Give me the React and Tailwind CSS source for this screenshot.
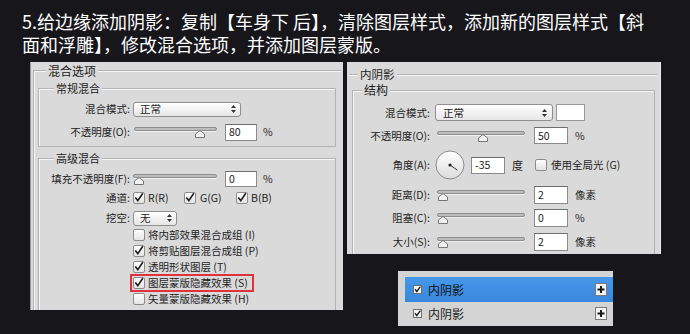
import React from 'react';

function Check({ on = true }) {
  return (
    <svg width="12" height="12" viewBox="0 0 12 12" className="block shrink-0">
      <defs>
        <linearGradient id="cbg" x1="0" y1="0" x2="0" y2="1">
          <stop offset="0" stopColor="#ffffff" />
          <stop offset="1" stopColor="#e2e2e2" />
        </linearGradient>
      </defs>
      <rect x="0.5" y="0.5" width="11" height="11" rx="1.5" fill="url(#cbg)" stroke="#8c8c8c" />
      {on && <path d="M2.3 5.6 L4.8 8.6 L9.8 1.2" fill="none" stroke="#1e1e1e" strokeWidth="1.6" />}
    </svg>
  );
}

function Arrows() {
  return (
    <svg width="5" height="8" viewBox="0 0 5 8" className="block shrink-0">
      <path d="M0 3 L2.5 0 L5 3 Z M0 5 L2.5 8 L5 5 Z" fill="#333" />
    </svg>
  );
}

function Slider({ w, pos }) {
  return (
    <svg width={w} height="14" className="block shrink-0">
      <rect x="0.5" y="2.5" width={w - 1} height="3" rx="1.5" fill="#bdbdbd" stroke="#8d8d8d" />
      <line x1="1" y1="6.5" x2={w - 1} y2="6.5" stroke="#f2f2f2" />
      <path
        d={`M${pos - 4.5} 12.5 L${pos - 4.5} 9 L${pos} 5.5 L${pos + 4.5} 9 L${pos + 4.5} 12.5 Z`}
        fill="#f3f3f3"
        stroke="#777"
      />
    </svg>
  );
}

function Dial() {
  return (
    <svg width="30" height="30" viewBox="0 0 30 30" className="block shrink-0">
      <defs>
        <linearGradient id="dial" x1="0" y1="0" x2="0" y2="1">
          <stop offset="0" stopColor="#ffffff" />
          <stop offset="1" stopColor="#dcdcdc" />
        </linearGradient>
      </defs>
      <circle cx="15" cy="15" r="14" fill="url(#dial)" stroke="#8a8a8a" />
      <line x1="15" y1="15" x2="22.4" y2="20.2" stroke="#333" strokeWidth="1" />
      <circle cx="15" cy="15" r="1.6" fill="#222" />
    </svg>
  );
}

function Plus() {
  return (
    <svg width="12" height="13" viewBox="0 0 12 13" className="block shrink-0">
      <rect x="0.5" y="0.5" width="11" height="12" fill="#f4f4f4" stroke="#7a7a7a" />
      <path d="M6 3 V10 M2.5 6.5 H9.5" stroke="#1a1a1a" strokeWidth="2" />
    </svg>
  );
}

function SmallCheck() {
  return (
    <svg width="9" height="9" viewBox="0 0 9 9" className="block shrink-0">
      <rect x="0.5" y="0.5" width="8" height="8" fill="#f6f6f6" stroke="#6f6f6f" />
      <path d="M2 4.3 L3.8 6.5 L7.4 1.6" fill="none" stroke="#222" strokeWidth="1.4" />
    </svg>
  );
}

const boxCls = 'bg-white border border-[#8a8a8a] border-t-[#6e6e6e] flex items-center pl-[3px]';

export default function App() {
  return (
    <div className="w-[690px] h-[334px] overflow-hidden bg-[#17161b] font-['Noto_Sans_CJK_SC','Noto_Sans',sans-serif] text-[#1d1d1d]">
      {/* Title */}
      <div className="pl-[22px] pt-[10px] text-[18px] leading-[23px] text-white whitespace-nowrap">
        <div>5.给边缘添加阴影：复制【车身下 后】，清除图层样式，添加新的图层样式【斜</div>
        <div>面和浮雕】，修改混合选项，并添加图层蒙版。</div>
      </div>

      <div className="flex mt-[6px]">
        {/* Left panel: 混合选项 */}
        <div className="ml-[30px] w-[313px] h-[248px] shrink-0 overflow-hidden bg-[#dadada] border-l border-[#9a9a9a] text-[10.5px] leading-[16px]">
          <div className="relative ml-[2px] mt-[8px] w-[308px] h-[300px] border-t border-l border-[#b3b3b3] shadow-[inset_1px_1px_0_#f6f6f6]">
            <span className="absolute -top-[8px] left-[12px] bg-[#dadada] px-[2px] text-[12px]">混合选项</span>

            {/* 常规混合 */}
            <div className="relative ml-[4px] mt-[17px] w-[298px] h-[59px] border border-[#b3b3b3] shadow-[inset_1px_1px_0_#f6f6f6]">
              <span className="absolute -top-[9px] left-[15px] bg-[#dadada] px-[2px] text-[11px]">常规混合</span>
              <div className="flex items-center h-[18px] mt-[11px]">
                <span className="w-[91px] text-right">混合模式:</span>
                <div className="ml-[3px] w-[108px] h-[15px] rounded-[3px] border border-[#8f8f8f] bg-gradient-to-b from-white to-[#e6e6e6] flex items-center justify-between pl-[6px] pr-[4px]">
                  <span>正常</span>
                  <Arrows />
                </div>
              </div>
              <div className="flex items-center h-[18px] mt-[5px]">
                <span className="w-[91px] text-right">不透明度(O):</span>
                <div className="ml-[4px]"><Slider w={83} pos={66} /></div>
                <div className={`ml-[8px] w-[32px] h-[17px] ${boxCls}`}>80</div>
                <span className="ml-[6px]">%</span>
              </div>
            </div>

            {/* 高级混合 */}
            <div className="relative ml-[4px] mt-[11px] w-[298px] h-[200px] border border-[#b3b3b3] shadow-[inset_1px_1px_0_#f6f6f6]">
              <span className="absolute -top-[9px] left-[15px] bg-[#dadada] px-[2px] text-[11px]">高级混合</span>
              <div className="flex items-center h-[16px] mt-[12px]">
                <span className="w-[91px] text-right whitespace-nowrap">填充不透明度(F):</span>
                <div className="ml-[3px]"><Slider w={84} pos={6} /></div>
                <div className={`ml-[8px] w-[32px] h-[16px] ${boxCls}`}>0</div>
                <span className="ml-[6px]">%</span>
              </div>
              <div className="flex items-center h-[16px] mt-[3px]">
                <span className="w-[91px] text-right">通道:</span>
                <div className="ml-[3px] w-[51px] flex items-center gap-[3px]"><Check /><span>R(R)</span></div>
                <div className="w-[52px] flex items-center gap-[4px]"><Check /><span>G(G)</span></div>
                <div className="flex items-center gap-[3px]"><Check /><span>B(B)</span></div>
              </div>
              <div className="flex items-center h-[16px] mt-[4px]">
                <span className="w-[91px] text-right">挖空:</span>
                <div className="ml-[3px] w-[44px] h-[15px] rounded-[3px] border border-[#8f8f8f] bg-gradient-to-b from-white to-[#e6e6e6] flex items-center justify-between pl-[6px] pr-[4px]">
                  <span>无</span>
                  <Arrows />
                </div>
              </div>
              <div className="flex items-center h-[16px] mt-[1px] pl-[94px] gap-[3px]"><Check on={false} /><span>将内部效果混合成组 (I)</span></div>
              <div className="flex items-center h-[16px] pl-[94px] gap-[3px]"><Check /><span>将剪贴图层混合成组 (P)</span></div>
              <div className="flex items-center h-[16px] pl-[94px] gap-[3px]"><Check /><span>透明形状图层 (T)</span></div>
              <div className="flex items-center h-[16px] pl-[91px]">
                <div className="-my-[1px] w-[124px] h-[18px] border-2 border-[#e0323a] flex items-center pl-[1px] gap-[3px]">
                  <Check /><span>图层蒙版隐藏效果 (S)</span>
                </div>
              </div>
              <div className="flex items-center h-[16px] pl-[94px] gap-[3px]"><Check on={false} /><span>矢量蒙版隐藏效果 (H)</span></div>
            </div>
          </div>
        </div>

        {/* Right column */}
        <div className="ml-[4px] flex flex-col">
          {/* 内阴影 panel */}
          <div className="w-[314px] h-[192px] overflow-hidden bg-[#dadada] border-r border-[#ececec] text-[10.5px] leading-[16px]">
            <div className="relative ml-[2px] mt-[12px] w-[308px] h-[200px] border-t border-[#b3b3b3] shadow-[inset_0_1px_0_#f6f6f6]">
              <span className="absolute -top-[9px] left-[9px] bg-[#dadada] px-[2px] text-[11.5px]">内阴影</span>

              {/* 结构 */}
              <div className="relative ml-[3px] mt-[15px] w-[303px] h-[190px] border border-[#b3b3b3] shadow-[inset_1px_1px_0_#f6f6f6]">
                <span className="absolute -top-[9px] left-[9px] bg-[#dadada] px-[2px] text-[12px]">结构</span>
                <div className="flex items-center h-[17px] mt-[13px]">
                  <span className="w-[77px] text-right">混合模式:</span>
                  <div className="ml-[5px] w-[118px] h-[17px] rounded-[3px] border border-[#8f8f8f] bg-gradient-to-b from-white to-[#e6e6e6] flex items-center justify-between pl-[7px] pr-[5px]">
                    <span>正常</span>
                    <Arrows />
                  </div>
                  <div className="ml-[3px] w-[29px] h-[17px] bg-white border border-[#9a9a9a]" />
                </div>
                <div className="flex items-center h-[17px] mt-[6px]">
                  <span className="w-[77px] text-right">不透明度(O):</span>
                  <div className="ml-[7px]"><Slider w={88} pos={46} /></div>
                  <div className={`ml-[9px] w-[34px] h-[17px] ${boxCls}`}>50</div>
                  <span className="ml-[7px]">%</span>
                </div>
                <div className="flex items-center h-[30px] mt-[6px]">
                  <span className="w-[77px] text-right">角度(A):</span>
                  <div className="ml-[5px]"><Dial /></div>
                  <div className={`ml-[6px] w-[34px] h-[17px] ${boxCls}`}>-35</div>
                  <span className="ml-[7px] text-[11px]">度</span>
                  <div className="ml-[12px] flex items-center gap-[4px]"><Check on={false} /><span>使用全局光 (G)</span></div>
                </div>
                <div className="flex items-center h-[18px] mt-[6px]">
                  <span className="w-[77px] text-right">距离(D):</span>
                  <div className="ml-[7px]"><Slider w={88} pos={6} /></div>
                  <div className={`ml-[9px] w-[34px] h-[18px] ${boxCls}`}>2</div>
                  <span className="ml-[7px]">像素</span>
                </div>
                <div className="flex items-center h-[18px] mt-[5px]">
                  <span className="w-[77px] text-right">阻塞(C):</span>
                  <div className="ml-[7px]"><Slider w={88} pos={6} /></div>
                  <div className={`ml-[9px] w-[34px] h-[18px] ${boxCls}`}>0</div>
                  <span className="ml-[7px]">%</span>
                </div>
                <div className="flex items-center h-[18px] mt-[6px]">
                  <span className="w-[77px] text-right">大小(S):</span>
                  <div className="ml-[7px]"><Slider w={88} pos={6} /></div>
                  <div className={`ml-[9px] w-[34px] h-[18px] ${boxCls}`}>2</div>
                  <span className="ml-[7px]">像素</span>
                </div>
              </div>
            </div>
          </div>

          {/* Layer style list */}
          <div className="ml-[51px] mt-[17px] w-[215px] h-[55px] bg-[#d4d4d4] pt-[6px] pl-[7px] text-[12px]">
            <div className="h-[25px] flex items-center pl-[8px] pr-[6px] bg-gradient-to-b from-[#4698ea] to-[#3787de]">
              <SmallCheck />
              <span className="ml-[6px] flex-1 text-[#111]">内阴影</span>
              <Plus />
            </div>
            <div className="h-[23px] flex items-center pl-[8px] pr-[6px]">
              <SmallCheck />
              <span className="ml-[6px] flex-1 text-[#222]">内阴影</span>
              <Plus />
            </div>
          </div>
        </div>
      </div>
    </div>
  );
}
